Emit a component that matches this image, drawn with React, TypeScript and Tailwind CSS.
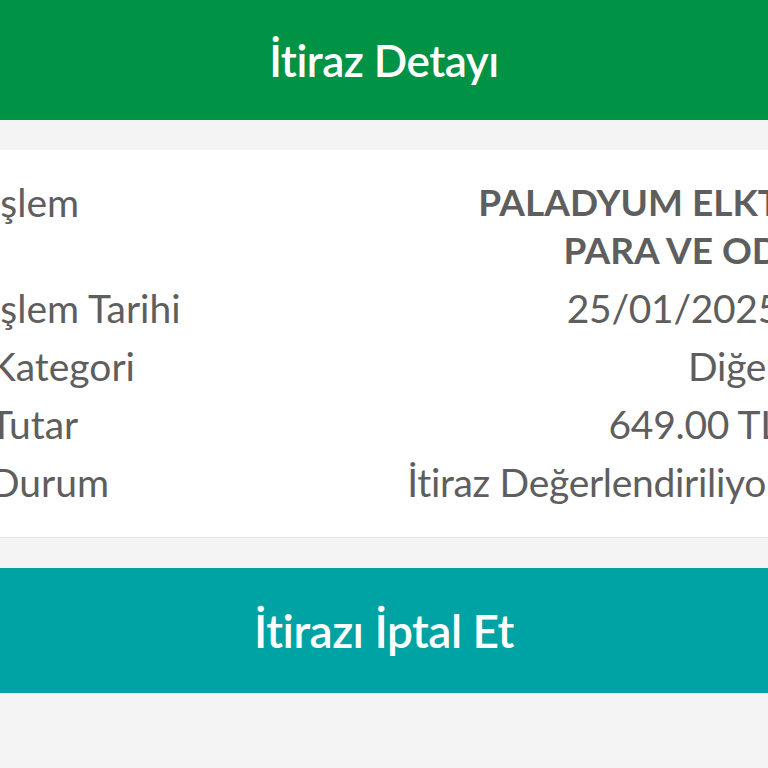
const rows: { label: string; value: string[]; bold?: boolean }[] = [
  { label: "İşlem", value: ["PALADYUM ELKT", "PARA VE OD"], bold: true },
  { label: "İşlem Tarihi", value: ["25/01/2025"] },
  { label: "Kategori", value: ["Diğer"] },
  { label: "Tutar", value: ["649.00 TL"] },
  { label: "Durum", value: ["İtiraz Değerlendiriliyor"] },
];

export default function App() {
  return (
    <div
      className="min-h-[768px] overflow-hidden bg-[#f4f4f4]"
      style={{ fontFamily: "Lato, 'Noto Sans', sans-serif" }}
    >
      <header className="flex h-[120px] items-center justify-center bg-[#009245]">
        <h1 className="text-[44px] font-semibold tracking-[-0.5px] text-white">İtiraz Detayı</h1>
      </header>

      <section className="mt-[30px] border-b border-[#e6e6e6] bg-white pt-[23px] pb-[26px]">
        <div className="ml-[-10px] w-[790px]">
          {rows.map((r) => (
            <div key={r.label} className="flex items-start justify-between py-[5px] text-[39px] leading-[48px] text-[#5e5e5e]">
              <span className="whitespace-nowrap">{r.label}</span>
              <div className={`text-right whitespace-nowrap ${r.bold ? "text-[37px] font-bold" : "tracking-[-0.3px]"}`}>
                {r.value.map((v) => (
                  <div key={v}>{v}</div>
                ))}
              </div>
            </div>
          ))}
        </div>
      </section>

      <button className="mt-[30px] flex h-[125px] w-full items-center justify-center bg-[#00a3a3] text-[46px] font-semibold tracking-[-0.5px] text-white">
        İtirazı İptal Et
      </button>
    </div>
  );
}
